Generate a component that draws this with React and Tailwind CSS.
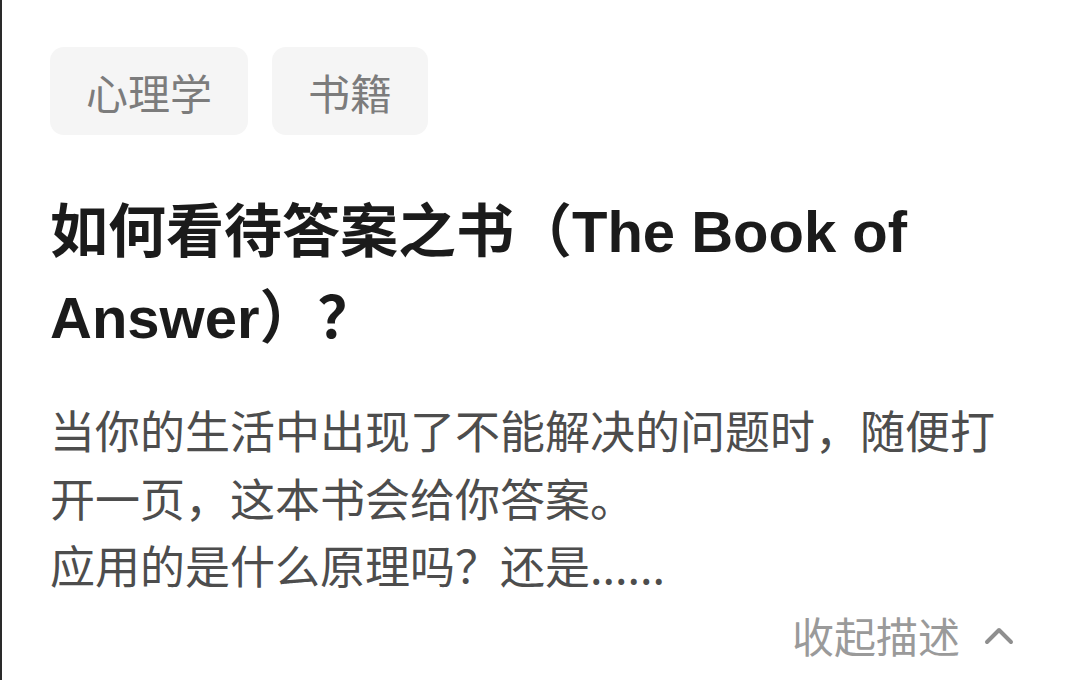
import React from "react";

const tags = ["心理学", "书籍"];

function ChevronUp() {
  return (
    <svg width="30" height="20" viewBox="0 0 30 20" fill="none">
      <path
        d="M3 17 L15 5 L27 17"
        stroke="#8f8f8f"
        strokeWidth="4"
        strokeLinecap="round"
        strokeLinejoin="round"
      />
    </svg>
  );
}

export default function App() {
  return (
    <div className="w-[1080px] h-[680px] bg-white border-l-2 border-[#2a2a2a] overflow-hidden px-[48px] pt-[47px] font-['Liberation_Sans','Noto_Sans_CJK_SC',sans-serif]">
      <div className="flex gap-[24px]">
        {tags.map((t) => (
          <div
            key={t}
            className="h-[88px] px-[36px] flex items-center rounded-[14px] bg-[#f5f5f5] text-[42px] text-[#7c7c7c] font-['Noto_Sans_CJK_SC',sans-serif]"
          >
            {t}
          </div>
        ))}
      </div>

      <h1 className="mt-[54px] text-[58px] leading-[86px] font-bold text-[#1b1b1b]">
        如何看待答案之书（The Book of Answer）？
      </h1>

      <p className="mt-[35px] text-[45px] leading-[67.5px] text-[#4d4d4d] font-['Noto_Sans_CJK_SC',sans-serif]">
        当你的生活中出现了不能解决的问题时，随便打开一页，这本书会给你答案。
        <br />
        应用的是什么原理吗？还是......
      </p>

      <div className="flex justify-end items-center gap-[24px] pr-[18px] mt-[6px] h-[60px]">
        <span className="text-[42px] text-[#9a9a9a] font-['Noto_Sans_CJK_SC',sans-serif]">
          收起描述
        </span>
        <ChevronUp />
      </div>
    </div>
  );
}
